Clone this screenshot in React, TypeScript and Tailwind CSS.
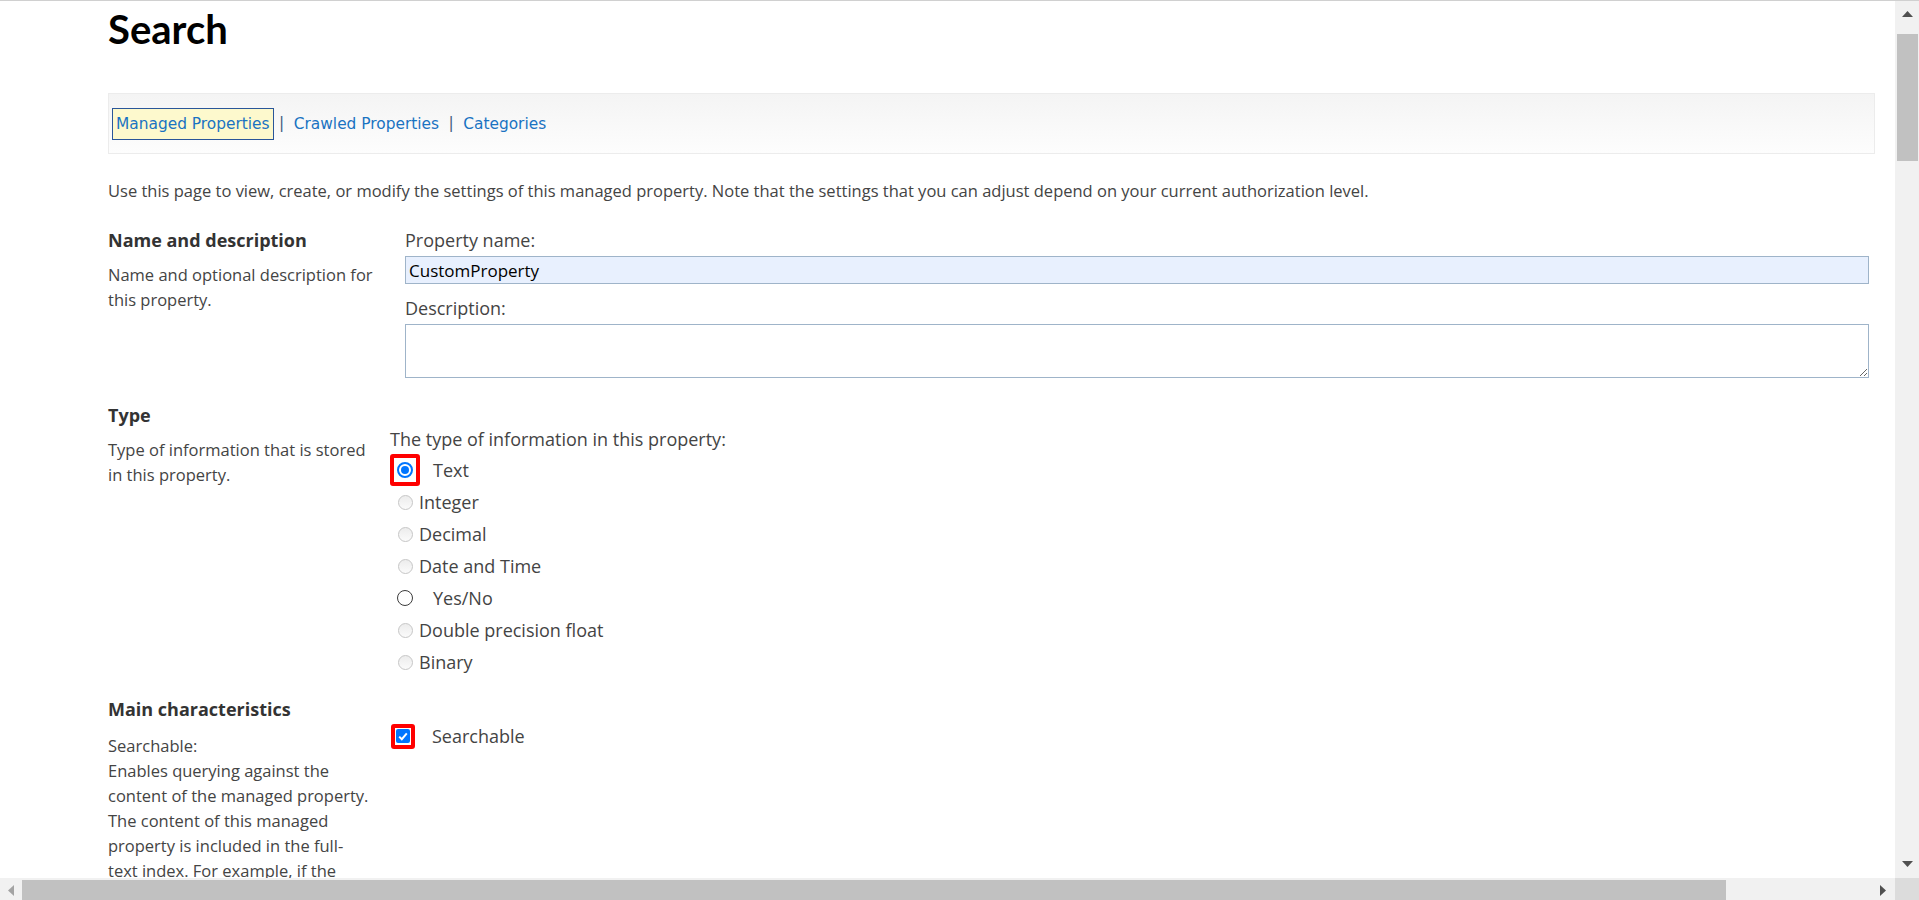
import React from "react";

function CheckedRadio() {
  return (
    <div className="w-[16px] h-[16px] rounded-full border-[2px] border-[#0075ff] bg-white flex items-center justify-center">
      <div className="w-[8px] h-[8px] rounded-full bg-[#0075ff]" />
    </div>
  );
}

function DisabledRadio() {
  return (
    <div className="ml-[8px] w-[15px] h-[15px] rounded-full border border-[#c6c6c6] bg-linear-to-b from-[#ececec] to-[#fbfbfb]" />
  );
}

function VScroll() {
  return (
    <div className="w-[24px] bg-[#f1f1f1] flex flex-col shrink-0">
      <div className="h-[26px] flex items-center justify-center">
        <svg width="11" height="6" viewBox="0 0 11 6">
          <polygon points="0,6 5.5,0 11,6" fill="#505050" />
        </svg>
      </div>
      <div className="mt-[7px] ml-[2px] w-[21px] h-[127px] bg-[#c1c1c1]" />
      <div className="flex-1" />
      <div className="h-[28px] flex items-center justify-center">
        <svg width="11" height="6" viewBox="0 0 11 6">
          <polygon points="0,0 11,0 5.5,6" fill="#505050" />
        </svg>
      </div>
    </div>
  );
}

function HScroll() {
  return (
    <div className="h-[22px] flex bg-[#f1f1f1] shrink-0">
      <div className="w-[22px] flex items-center justify-center pt-[2px]">
        <svg width="6" height="11" viewBox="0 0 6 11">
          <polygon points="6,0 6,11 0,5.5" fill="#a3a3a3" />
        </svg>
      </div>
      <div className="w-[1704px] mt-[2px] bg-[#c1c1c1]" />
      <div className="flex-1" />
      <div className="w-[24px] flex items-center justify-center pt-[2px]">
        <svg width="6" height="11" viewBox="0 0 6 11">
          <polygon points="0,0 6,5.5 0,11" fill="#505050" />
        </svg>
      </div>
      <div className="w-[24px] bg-[#dcdcdc]" />
    </div>
  );
}

export default function App() {
  return (
    <div className="w-[1919px] h-[900px] overflow-hidden flex flex-col bg-white border-t border-[#d0d0d0] font-['Open_Sans',sans-serif]">
      <div className="flex flex-1 min-h-0">
        <div className="flex-1 min-w-0 overflow-hidden pl-[108px] pr-[20px]">
          <h1 className="mt-[4px] text-[40px] leading-[48px] font-bold text-black font-['Lato',sans-serif]">
            Search
          </h1>

          <div className="mt-[40px] h-[61px] border border-[#ececec] bg-linear-to-b from-[#f4f4f4] to-[#fdfdfd] flex items-center pl-[3px] font-['DejaVu_Sans',sans-serif] text-[15.4px] text-[#1a73c2]">
            <span className="border border-[#2a5699] bg-[#fdf9cd] px-[3px] leading-[30px]">
              Managed Properties
            </span>
            <span className="mx-[5.5px] text-[#44607e]">|</span>
            <span className="border border-transparent px-[3px] leading-[30px]">
              Crawled Properties
            </span>
            <span className="mx-[5.5px] text-[#44607e]">|</span>
            <span className="border border-transparent px-[3px] leading-[30px]">
              Categories
            </span>
          </div>

          <p className="mt-[25px] text-[16.5px] leading-[24px] text-[#444444]">
            Use this page to view, create, or modify the settings of this managed property. Note that the settings that you can adjust depend on your current authorization level.
          </p>

          {/* Name and description */}
          <div className="mt-[24px] grid grid-cols-[282px_1fr]">
            <div>
              <h3 className="text-[18px] leading-[26px] font-bold text-[#333333]">Name and description</h3>
              <p className="mt-[9px] text-[16.5px] leading-[25px] text-[#444444]">
                Name and optional description for
                <br />
                this property.
              </p>
            </div>
            <div className="pl-[15px] pr-[6px]">
              <div className="text-[18px] leading-[26px] text-[#444444]">Property name:</div>
              <input
                readOnly
                value="CustomProperty"
                className="mt-[3px] block w-full h-[28px] border border-[#9fb4c9] bg-[#e8f0fe] pl-[3px] text-[17px] text-black outline-none"
              />
              <div className="mt-[11px] text-[18px] leading-[26px] text-[#444444]">Description:</div>
              <textarea
                readOnly
                className="mt-[3px] block w-full h-[54px] border border-[#9fb4c9] bg-white resize outline-none"
              />
            </div>
          </div>

          {/* Type */}
          <div className="mt-[24px] grid grid-cols-[282px_1fr]">
            <div>
              <h3 className="text-[18px] leading-[26px] font-bold text-[#333333]">Type</h3>
              <p className="mt-[9px] text-[16.5px] leading-[25px] text-[#444444]">
                Type of information that is stored
                <br />
                in this property.
              </p>
            </div>
            <div className="pt-[24px]">
              <div className="text-[18px] leading-[26px] text-[#444444]">
                The type of information in this property:
              </div>
              <div className="mt-[2px] text-[18px] text-[#444444]">
                <div className="h-[32px] flex items-center">
                  <div className="w-[30px] h-[32px] border-[4px] border-[#ff0000] rounded-[3px] flex items-center justify-center">
                    <CheckedRadio />
                  </div>
                  <span className="ml-[13px]">Text</span>
                </div>
                <div className="h-[32px] flex items-center">
                  <DisabledRadio />
                  <span className="ml-[6px]">Integer</span>
                </div>
                <div className="h-[32px] flex items-center">
                  <DisabledRadio />
                  <span className="ml-[6px]">Decimal</span>
                </div>
                <div className="h-[32px] flex items-center">
                  <DisabledRadio />
                  <span className="ml-[6px]">Date and Time</span>
                </div>
                <div className="h-[32px] flex items-center">
                  <div className="ml-[7px] w-[16px] h-[16px] rounded-full border-[1.5px] border-[#3b3b3b] bg-white" />
                  <span className="ml-[20px]">Yes/No</span>
                </div>
                <div className="h-[32px] flex items-center">
                  <DisabledRadio />
                  <span className="ml-[6px]">Double precision float</span>
                </div>
                <div className="h-[32px] flex items-center">
                  <DisabledRadio />
                  <span className="ml-[6px]">Binary</span>
                </div>
              </div>
            </div>
          </div>

          {/* Main characteristics */}
          <div className="mt-[18px] grid grid-cols-[282px_1fr]">
            <div>
              <h3 className="text-[18px] leading-[26px] font-bold text-[#333333]">Main characteristics</h3>
              <p className="mt-[11px] text-[16.5px] leading-[25px] text-[#444444]">
                Searchable:
                <br />
                Enables querying against the
                <br />
                content of the managed property.
                <br />
                The content of this managed
                <br />
                property is included in the full-
                <br />
                text index. For example, if the
                <br />
                property is "author", a simple
                <br />
                query for "Smith" returns items
                <br />
                containing the word "Smith" and
                <br />
                items whose author property
                <br />
                contains "Smith".
              </p>
            </div>
            <div className="pt-[27px]">
              <div className="h-[26px] flex items-center">
                <div className="ml-[1px] w-[24px] h-[25px] border-[4px] border-[#ff0000] rounded-[3px] flex items-center justify-center">
                  <div className="w-[14px] h-[14px] rounded-[2px] bg-[#0075ff] flex items-center justify-center">
                    <svg width="10" height="9" viewBox="0 0 10 9">
                      <polyline points="1.2,4.6 3.8,7.2 8.8,1.4" fill="none" stroke="white" strokeWidth="2" />
                    </svg>
                  </div>
                </div>
                <span className="ml-[17px] text-[18px] text-[#444444]">Searchable</span>
              </div>
            </div>
          </div>
        </div>
        <VScroll />
      </div>
      <HScroll />
    </div>
  );
}
